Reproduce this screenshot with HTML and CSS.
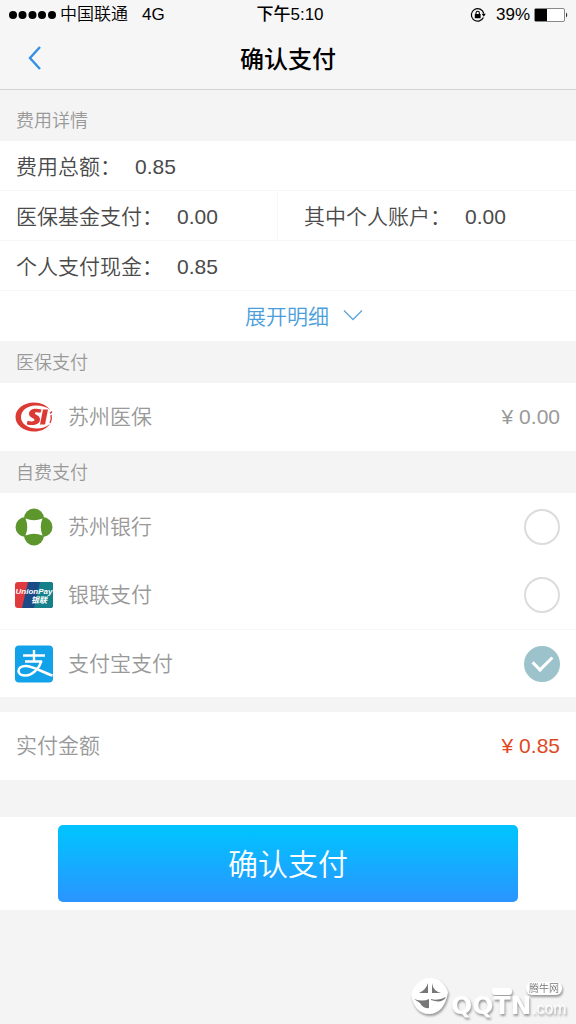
FILE: index.html
```html
<!DOCTYPE html>
<html lang="zh-CN">

<head>
    <meta charset="UTF-8">
    <meta name="viewport" content="width=device-width, initial-scale=1.0">
    <title>确认支付</title>

    <link rel="stylesheet" href="styles.css">
</head>

<body>
    <header>
        <div class="status-bar">
            <div class="status-left">
                <svg class="signal" width="48" height="10" viewBox="0 0 48 10" fill="#000">
                    <circle cx="5" cy="5" r="4" />
                    <circle cx="14.5" cy="5" r="4" />
                    <circle cx="24.500" cy="5" r="4" />
                    <circle cx="34" cy="5" r="4" />
                    <circle cx="44" cy="5" r="4" />
                </svg>
                <span>中国联通</span>
                <span class="network">4G</span>
            </div>
            <span class="time">下午5:10</span>
            <div class="status-right">
                <svg width="16" height="16" viewBox="0 0 16 16">
                    <path d="M13.4 10.5A6.3 6.3 0 1 1 13.8 6.5" fill="none" stroke="#000" stroke-width="1.2" />
                    <path d="M11.6 6.8h4.2l-2 3z" fill="#000" />
                    <rect x="4.8" y="7" width="5.8" height="4.3" rx="0.5" fill="#000" />
                    <path d="M6 7.2V5.9a1.7 1.7 0 0 1 3.4 0v1.3" fill="none" stroke="#000" stroke-width="1.1" />
                </svg>
                <span>39%</span>
                <svg width="34" height="16" viewBox="0 0 34 16">
                    <rect x="0.5" y="1.5" width="30" height="13" rx="1.5" fill="#fff" stroke="#888" />
                    <rect x="1" y="2" width="12" height="12" fill="#000" />
                    <path d="M32 5.5c1.6.8 1.6 4.2 0 5z" fill="#333" />
                </svg>
            </div>
        </div>
        <div class="nav-bar">
            <a class="back" href="#" aria-label="返回">
                <svg width="16" height="26" viewBox="0 0 16 26">
                    <path d="M14 2L4 13l10 11" fill="none" stroke="#3390e4" stroke-width="2.4" />
                </svg>
            </a>
            <h1>确认支付</h1>
        </div>
    </header>

    <main>
        <h2 class="first">费用详情</h2>
        <dl class="fees">
            <div class="fee wide">
                <dt>费用总额：</dt>
                <dd>0.85</dd>
            </div>
            <div class="fee split">
                <dt>医保基金支付：</dt>
                <dd>0.00</dd>
            </div>
            <div class="fee">
                <dt>其中个人账户：</dt>
                <dd>0.00</dd>
            </div>
            <div class="fee wide">
                <dt>个人支付现金：</dt>
                <dd>0.85</dd>
            </div>
        </dl>
        <button class="expand" type="button">
            展开明细
            <svg width="20" height="12" viewBox="0 0 20 12">
                <path d="M1 1.5l9 9 9-9" fill="none" stroke="#5aa7dc" stroke-width="1.3" />
            </svg>
        </button>

        <h2>医保支付</h2>
        <div class="row">
            <svg class="logo" viewBox="0 0 38 38">
                <path d="M35.5 12C32 7.500 26 4.500 19 4.500 8.500 4.500.5 11 .5 19S8.500 33.500 19 33.500c6.500 0 12.500-2.500 16-7.500-4 3-8.500 4.500-13 4.500C13 30.500 6 26 6 19.300 6 12.500 12.500 7.500 20.500 7.500c6.500 0 11.500 1.500 15 4.500z" fill="#dc3a34" />
                <path d="M26.500 11.500c-8-2-12.500.2-12.500 4.400 0 4.100 6 3.700 5.500 6.200-.4 1.900-3.500 1.600-7 .7l-.7 3.600c7 1.500 12.700.3 13.200-4.700.4-4.400-5.500-4.600-5.100-6.600.3-1.300 2.500-1.100 5.600-.3z" fill="#dc3a34" />
                <path d="M28 11.500h5l-3 15h-5z" fill="#dc3a34" />
                <path d="M37 13.500l-2 2M36 17c.8 3 .3 5.500-1 8" fill="none" stroke="#dc3a34" stroke-width="1.4" />
            </svg>
            <span>苏州医保</span>
            <span class="amount">¥ 0.00</span>
        </div>

        <h2>自费支付</h2>
        <label class="row">
            <svg class="logo" viewBox="0 0 38 38">
                <g fill="#5d962c">
                    <circle cx="19" cy="10.5" r="10" />
                    <circle cx="27.5" cy="19" r="10" />
                    <circle cx="19" cy="27.5" r="10" />
                    <circle cx="10.5" cy="19" r="10" />
                </g>
                <path d="M10.500 10.500Q19 14 27.500 10.500 24 19 27.500 27.500 19 24 10.500 27.500 14 19 10.500 10.500z" fill="#fff" />
            </svg>
            <span>苏州银行</span>
            <input type="radio" name="pay" value="bank">
        </label>
        <label class="row">
            <svg class="logo" viewBox="0 0 38 38">
                <clipPath id="card">
                    <rect y="6" width="38" height="26" rx="3" />
                </clipPath>
                <g clip-path="url(#card)">
                    <rect y="6" width="38" height="26" fill="#e0393e" />
                    <path d="M13 6h25v26H7z" fill="#1b4a87" />
                    <path d="M25 6h13v26H19z" fill="#15808a" />
                </g>
                <text class="union" x="19" y="18" text-anchor="middle">UnionPay</text>
                <text class="union" x="24" y="27" text-anchor="middle">银联</text>
            </svg>
            <span>银联支付</span>
            <input type="radio" name="pay" value="unionpay">
        </label>
        <label class="row line">
            <svg class="logo" viewBox="0 0 38 38">
                <rect width="38" height="37" y="0.5" rx="4" fill="#12a2e9" />
                <g fill="none" stroke="#fff">
                    <path d="M19 5v11M8 10.500h22M10 16.500h17" stroke-width="2.4" />
                    <path d="M26.500 16c-2 7-9 14.500-16 14.500-4.500 0-7-2-7-4.500 0-3 3-5 7-5 8 0 16 6 27 9.500" stroke-width="2.6" />
                </g>
            </svg>
            <span>支付宝支付</span>
            <input type="radio" name="pay" value="alipay" checked>
        </label>

        <div class="row total">
            <span>实付金额</span>
            <span class="amount">¥ 0.85</span>
        </div>

        <div class="submit">
            <button type="button">确认支付</button>
        </div>
    </main>

    <!-- site mark over the bottom corner -->
    <svg class="watermark" width="170" height="48" viewBox="0 0 170 48" role="img" aria-label="腾牛网 QQTN.com">
        <g fill="#fff">
            <path d="M5 19C8 8 16 2 24 2c9 0 15 6 18 14-2 14-9 22-19 22C13 38 7 30 5 19z" />
            <rect x="86" y="12" width="20" height="7" rx="3" />
            <rect x="120" y="6" width="36" height="13" rx="6" />
            <text class="mark-main" x="45" y="38">QQTN</text>
            <text class="mark-com" x="126" y="38">.com</text>
        </g>
        <path d="M13 17q7-3 9-10v10zM26 7q1 8 9 10l-9 0zM8 23q9 3 15 0l0 9q-6 1-9-5M25 23q7 2 15-2-4 7-15 3z" fill="#777" />
        <text class="mark-cn" x="123" y="16">腾牛网</text>
    </svg>
</body>

</html>
```

FILE: styles.css
```css
* {
    box-sizing: border-box;
}

body {
    margin: 0;
    background-color: #f4f4f4;
    color: #4a4a4a;
    font-family: "Liberation Sans", "Noto Sans CJK SC", sans-serif;
    font-size: 21px;
    font-weight: 350;
}

header {
    background-color: #f6f6f6;
    border-bottom: 1px solid #d2d2d2;
    color: #000;
}

.status-bar {
    display: grid;
    grid-template-columns: 1fr auto 1fr;
    align-items: center;
    height: 30px;
    padding: 0 8px;
    font-size: 17px;
    line-height: 30px;
}

.status-left,
.status-right {
    display: flex;
    align-items: center;
    gap: 4px;
}

.status-right {
    justify-content: flex-end;
}

.status-right svg:first-child {
    margin-right: 6px;
}

.network {
    margin-left: 10px;
}

.time {
    padding-left: 4px;
    font-weight: 500;
}

.nav-bar {
    display: grid;
    grid-template-columns: 48px 1fr 48px;
    align-items: center;
    height: 59px;
    padding: 0 0 4px;
}

.back {
    display: flex;
    justify-content: flex-end;
    padding-right: 6px;
}

h1 {
    margin: 0;
    font-size: 24px;
    font-weight: 500;
    text-align: center;
}

/* grey section titles */
h2 {
    margin: 0;
    padding: 2px 16px 0;
    color: #999;
    font-size: 18px;
    font-weight: 350;
    line-height: 40px;
}

h2.first {
    padding-top: 11px;
}

.fees {
    display: grid;
    grid-template-columns: 1fr 1fr;
    margin: 0;
    background-color: #fff;
}

.fee {
    display: flex;
    gap: 14px;
    height: 50px;
    padding: 0 16px;
    border-bottom: 1px solid #f6f6f6;
    line-height: 52px;
}

.fee dd {
    margin: 0;
}

.wide {
    grid-column: 1 / 3;
}

.split {
    position: relative;
}

.split::after {
    content: "";
    position: absolute;
    top: 0;
    right: 10px;
    height: 100%;
    border-right: 1px solid #f6f6f6;
}

.expand {
    display: flex;
    align-items: center;
    justify-content: center;
    gap: 14px;
    width: 100%;
    height: 50px;
    padding: 0 0 2px 32px;
    border: 0;
    background-color: #fff;
    color: #4a9edb;
    font: inherit;
    cursor: pointer;
}

.row {
    display: flex;
    align-items: center;
    gap: 15px;
    height: 68px;
    padding: 0 16px 0 15px;
    background-color: #fff;
    color: #999;
    line-height: 24px;
}

.line {
    border-top: 1px solid #f6f6f6;
}

.logo {
    width: 38px;
    height: 38px;
}

.union {
    fill: #fff;
    font-size: 8px;
    font-style: italic;
    font-weight: bold;
}

.amount {
    margin-left: auto;
}

.row input {
    appearance: none;
    width: 36px;
    height: 36px;
    margin: 0 0 0 auto;
    border: 2px solid #dcdcdc;
    border-radius: 50%;
    cursor: pointer;
}

.row input:checked {
    display: grid;
    place-items: center;
    border-color: #9cc2cb;
    background-color: #9cc2cb;
}

/* tick */
.row input:checked::before {
    content: "";
    width: 16px;
    height: 9px;
    margin-bottom: 5px;
    border-bottom: 3px solid #fff;
    border-left: 3px solid #fff;
    transform: rotate(-45deg);
}

.total {
    margin-top: 15px;
    padding-left: 16px;
}

.total .amount {
    color: #e0491f;
}

.submit {
    margin-top: 37px;
    padding: 8px 10%;
    background-color: #fff;
}

.submit button {
    display: block;
    width: 100%;
    height: 77px;
    padding: 0 0 4px;
    border: 0;
    border-radius: 5px;
    background: linear-gradient(#03c1ff 10%, #2a94ff);
    color: #fff;
    font: inherit;
    font-size: 30px;
    cursor: pointer;
}

.watermark {
    position: fixed;
    right: 0;
    bottom: 0;
    filter: drop-shadow(1px 2px 1px #999);
}

.mark-main {
    font-family: "DejaVu Sans", sans-serif;
    font-size: 25px;
    font-weight: bold;
}

.mark-com {
    font-size: 16px;
}

.mark-cn {
    fill: #777;
    font-size: 10px;
}
```
